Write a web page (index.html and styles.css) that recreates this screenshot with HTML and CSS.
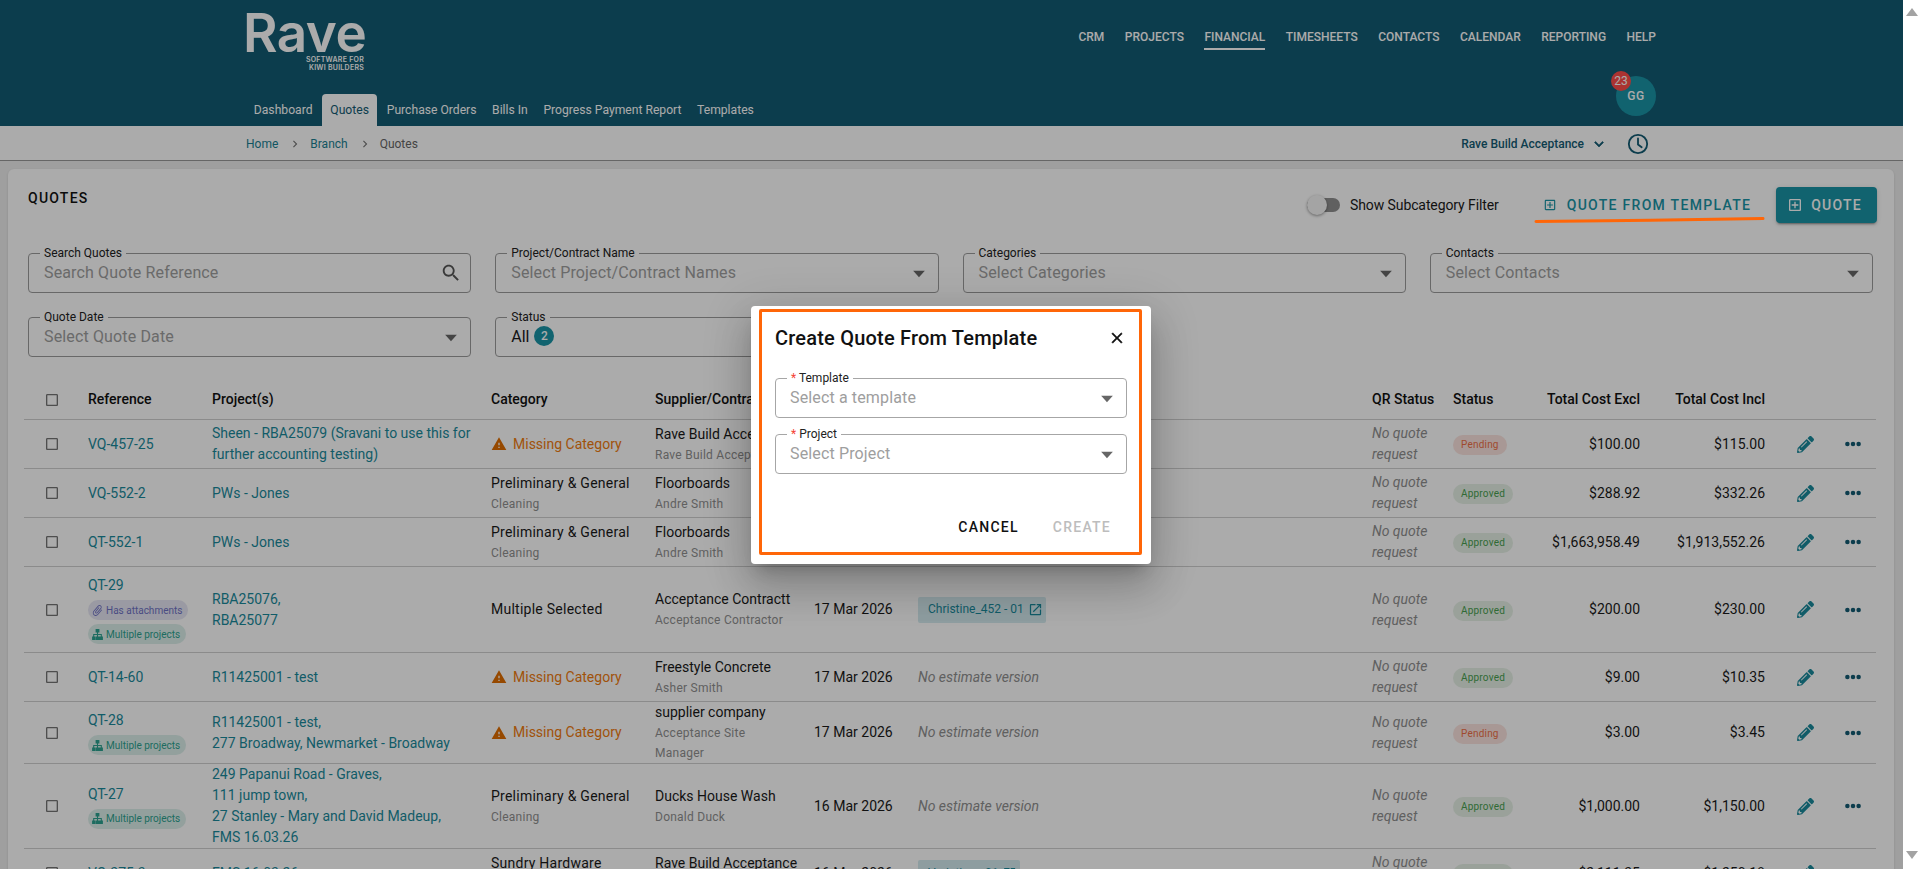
FILE: index.html
```html
<!DOCTYPE html>
<html lang="en">
<head>
<meta charset="utf-8">
<title>Quotes</title>
<link rel="stylesheet" href="styles.css">
</head>
<body>
<svg class="sprite" aria-hidden="true">
  <symbol id="i-search" viewBox="0 0 24 24"><path d="M15.5 14h-.79l-.28-.27C15.41 12.59 16 11.11 16 9.5 16 5.91 13.09 3 9.5 3S3 5.91 3 9.5 5.91 16 9.5 16c1.61 0 3.09-.59 4.23-1.57l.27.28v.79l5 4.99L20.49 19l-4.99-5zm-6 0C7.01 14 5 11.99 5 9.5S7.01 5 9.5 5 14 7.01 14 9.5 11.99 14 9.5 14z"/></symbol>
  <symbol id="i-caret" viewBox="0 0 24 24"><path d="M5 8h14l-7 8z"/></symbol>
  <symbol id="i-warn" viewBox="0 0 24 24"><path d="M1 21h22L12 2 1 21zm12-3h-2v-2h2v2zm0-4h-2v-4h2v4z"/></symbol>
  <symbol id="i-edit" viewBox="0 0 512 512"><path d="M497.900 142.100l-46.100 46.100c-4.700 4.700-12.300 4.700-17 0l-111-111c-4.700-4.700-4.700-12.300 0-17l46.100-46.100c18.700-18.700 49.100-18.700 67.900 0l60.100 60.100c18.800 18.700 18.800 49.100 0 67.900zM284.200 99.800L21.600 362.400.4 483.900c-2.900 16.400 11.400 30.600 27.800 27.800l121.500-21.300 262.600-262.600c4.700-4.700 4.700-12.300 0-17l-111-111c-4.800-4.700-12.400-4.700-17.100 0zM124.100 339.900c-5.500-5.500-5.500-14.300 0-19.800l154-154c5.500-5.500 14.300-5.500 19.800 0s5.500 14.300 0 19.800l-154 154c-5.500 5.500-14.300 5.500-19.800 0zM88 424h48v36.300l-64.500 11.300-31.100-31.100L51.700 376H88v48z"/></symbol>
  <symbol id="i-dots" viewBox="0 0 24 24"><circle cx="4.5" cy="12" r="3"/><circle cx="12" cy="12" r="3"/><circle cx="19.5" cy="12" r="3"/></symbol>
  <symbol id="i-box" viewBox="0 0 24 24"><path d="M19 3H5c-1.1 0-2 .9-2 2v14c0 1.1.9 2 2 2h14c1.1 0 2-.9 2-2V5c0-1.1-.9-2-2-2zm0 16H5V5h14v14zm-8-2h2v-4h4v-2h-4V7h-2v4H7v2h4z"/></symbol>
  <symbol id="i-check" viewBox="0 0 24 24"><path d="M19 5v14H5V5h14m0-2H5c-1.1 0-2 .9-2 2v14c0 1.1.9 2 2 2h14c1.1 0 2-.9 2-2V5c0-1.1-.9-2-2-2z"/></symbol>
  <symbol id="i-clip" viewBox="0 0 24 24"><path transform="rotate(40 12 12)" d="M16.5 6v11.5c0 2.21-1.79 4-4 4s-4-1.79-4-4V5c0-1.38 1.12-2.5 2.5-2.5s2.5 1.12 2.5 2.5v10.5c0 .55-.45 1-1 1s-1-.45-1-1V6H10v9.5c0 1.38 1.12 2.5 2.5 2.5s2.5-1.12 2.5-2.5V5c0-2.21-1.79-4-4-4S7 2.79 7 5v12.5c0 3.04 2.46 5.5 5.5 5.5s5.5-2.46 5.5-5.5V6h-1.5z"/></symbol>
  <symbol id="i-tree" viewBox="0 0 24 24"><path d="M8.500 2h7v6.500h-2.500V11H20v4.500h2V22h-6.500v-6.500h2.500V13h-5v2.500h2.500V22h-6.500v-6.500H11V13H6v2.500h2.500V22H2v-6.500h2V11h7V8.500H8.500z"/></symbol>
  <symbol id="i-open" viewBox="0 0 24 24"><path d="M19 19H5V5h7V3H5c-1.11 0-2 .9-2 2v14c0 1.1.89 2 2 2h14c1.100 0 2-.9 2-2v-7h-2v7zM14 3v2h3.590l-9.830 9.830 1.410 1.410L19 6.410V10h2V3h-7z"/></symbol>
  <symbol id="i-chev" viewBox="0 0 24 24"><path d="M7.410 8.590 12 13.170l4.590-4.580L18 10l-6 6-6-6z"/></symbol>
  <symbol id="i-next" viewBox="0 0 24 24"><path d="M10 6 8.590 7.410 13.170 12l-4.580 4.590L10 18l6-6z"/></symbol>
  <symbol id="i-close" viewBox="0 0 24 24"><path d="M19 6.410 17.590 5 12 10.590 6.410 5 5 6.410 10.590 12 5 17.590 6.410 19 12 13.410 17.590 19 19 17.590 13.410 12z"/></symbol>
  <symbol id="i-clock" viewBox="0 0 24 24"><circle cx="12" cy="12" r="10" fill="none" stroke="currentColor" stroke-width="2"/><path d="M12 6v6.500l4 3" fill="none" stroke="currentColor" stroke-width="2" stroke-linecap="round"/></symbol>
</svg>

<div class="shell">
  <div class="app">
    <header class="header">
      <div class="brand-col">
        <div class="logo">
          <div class="logo-word">Rave</div>
          <div class="logo-tag">SOFTWARE FOR<br>KIWI BUILDERS</div>
        </div>
        <nav class="tabs">
          <a class="tab">Dashboard</a>
          <a class="tab tab-active">Quotes</a>
          <a class="tab">Purchase Orders</a>
          <a class="tab">Bills In</a>
          <a class="tab">Progress Payment Report</a>
          <a class="tab">Templates</a>
        </nav>
      </div>
      <div class="user-col">
        <nav class="topnav">
          <a class="topnav-item">CRM</a>
          <a class="topnav-item">PROJECTS</a>
          <a class="topnav-item topnav-active">FINANCIAL</a>
          <a class="topnav-item">TIMESHEETS</a>
          <a class="topnav-item">CONTACTS</a>
          <a class="topnav-item">CALENDAR</a>
          <a class="topnav-item">REPORTING</a>
          <a class="topnav-item">HELP</a>
        </nav>
        <div class="avatar">GG<span class="avatar-badge">23</span></div>
      </div>
    </header>

    <div class="crumbbar">
      <div class="crumbs">
        <a class="crumb-link">Home</a>
        <svg class="crumb-sep"><use href="#i-next"/></svg>
        <a class="crumb-link">Branch</a>
        <svg class="crumb-sep"><use href="#i-next"/></svg>
        <span class="crumb-current">Quotes</span>
      </div>
      <div class="org">
        <span class="org-name">Rave Build Acceptance</span>
        <svg class="org-chev"><use href="#i-chev"/></svg>
        <svg class="org-clock"><use href="#i-clock"/></svg>
      </div>
    </div>

    <main class="page">
      <section class="card">
        <div class="card-head">
          <h1 class="card-title">QUOTES</h1>
          <div class="card-actions">
            <span class="switch"><span class="switch-thumb"></span></span>
            <span class="switch-label">Show Subcategory Filter</span>
            <button class="btn-text"><svg class="btn-icon"><use href="#i-box"/></svg>QUOTE FROM TEMPLATE</button>
            <button class="btn-solid"><svg class="btn-icon"><use href="#i-box"/></svg>QUOTE</button>
          </div>
        </div>

        <div class="filters">
          <div class="field"><span class="field-label">Search Quotes</span><span class="field-ph">Search Quote Reference</span><svg class="field-search"><use href="#i-search"/></svg></div>
          <div class="field"><span class="field-label">Project/Contract Name</span><span class="field-ph">Select Project/Contract Names</span><svg class="field-caret"><use href="#i-caret"/></svg></div>
          <div class="field"><span class="field-label">Categories</span><span class="field-ph">Select Categories</span><svg class="field-caret"><use href="#i-caret"/></svg></div>
          <div class="field"><span class="field-label">Contacts</span><span class="field-ph">Select Contacts</span><svg class="field-caret"><use href="#i-caret"/></svg></div>
          <div class="field"><span class="field-label">Quote Date</span><span class="field-ph">Select Quote Date</span><svg class="field-caret"><use href="#i-caret"/></svg></div>
          <div class="field"><span class="field-label">Status</span><span class="field-value">All</span><span class="count">2</span><svg class="field-caret"><use href="#i-caret"/></svg></div>
        </div>

        <table class="grid">
          <colgroup>
            <col class="c-check"><col class="c-ref"><col class="c-proj"><col class="c-cat"><col class="c-sup"><col class="c-date"><col class="c-est"><col class="c-qr"><col class="c-status"><col class="c-excl"><col class="c-incl"><col class="c-edit"><col class="c-more">
          </colgroup>
          <thead>
            <tr>
              <th class="cell-center"><svg class="check"><use href="#i-check"/></svg></th>
              <th>Reference</th><th>Project(s)</th><th>Category</th><th>Supplier/Contractor</th><th>Date</th><th>Estimate Version</th><th>QR Status</th><th>Status</th>
              <th class="num">Total Cost Excl</th><th class="num">Total Cost Incl</th><th></th><th></th>
            </tr>
          </thead>
          <tbody>
            <tr>
              <td class="cell-center"><svg class="check"><use href="#i-check"/></svg></td>
              <td><a class="link">VQ-457-25</a></td>
              <td class="cell-proj"><a class="link">Sheen - RBA25079 (Sravani to use this for further accounting testing)</a></td>
              <td class="cell-cat"><span class="missing"><svg class="warn"><use href="#i-warn"/></svg>Missing Category</span></td>
              <td><div>Rave Build Acceptance</div><div class="sub">Rave Build Acceptance</div></td>
              <td>17 Mar 2026</td><td class="muted-i">No estimate version</td>
              <td class="muted-i">No quote request</td>
              <td><span class="pill pill-pending">Pending</span></td>
              <td class="num">$100.00</td><td class="num">$115.00</td>
              <td class="cell-edit"><svg class="edit"><use href="#i-edit"/></svg></td>
              <td class="cell-center"><svg class="dots"><use href="#i-dots"/></svg></td>
            </tr>
            <tr>
              <td class="cell-center"><svg class="check"><use href="#i-check"/></svg></td>
              <td><a class="link">VQ-552-2</a></td>
              <td class="cell-proj"><a class="link">PWs - Jones</a></td>
              <td class="cell-cat"><div>Preliminary &amp; General</div><div class="sub">Cleaning</div></td>
              <td><div>Floorboards</div><div class="sub">Andre Smith</div></td>
              <td>17 Mar 2026</td><td class="muted-i">No estimate version</td>
              <td class="muted-i">No quote request</td>
              <td><span class="pill pill-ok">Approved</span></td>
              <td class="num">$288.92</td><td class="num">$332.26</td>
              <td class="cell-edit"><svg class="edit"><use href="#i-edit"/></svg></td>
              <td class="cell-center"><svg class="dots"><use href="#i-dots"/></svg></td>
            </tr>
            <tr>
              <td class="cell-center"><svg class="check"><use href="#i-check"/></svg></td>
              <td><a class="link">QT-552-1</a></td>
              <td class="cell-proj"><a class="link">PWs - Jones</a></td>
              <td class="cell-cat"><div>Preliminary &amp; General</div><div class="sub">Cleaning</div></td>
              <td><div>Floorboards</div><div class="sub">Andre Smith</div></td>
              <td>17 Mar 2026</td><td class="muted-i">No estimate version</td>
              <td class="muted-i">No quote request</td>
              <td><span class="pill pill-ok">Approved</span></td>
              <td class="num">$1,663,958.49</td><td class="num">$1,913,552.26</td>
              <td class="cell-edit"><svg class="edit"><use href="#i-edit"/></svg></td>
              <td class="cell-center"><svg class="dots"><use href="#i-dots"/></svg></td>
            </tr>
            <tr>
              <td class="cell-center"><svg class="check"><use href="#i-check"/></svg></td>
              <td><div class="ref-stack"><a class="link">QT-29</a><span class="chip chip-purple"><svg class="chip-icon"><use href="#i-clip"/></svg>Has attachments</span><span class="chip chip-teal"><svg class="chip-icon"><use href="#i-tree"/></svg>Multiple projects</span></div></td>
              <td class="cell-proj"><a class="link">RBA25076,<br>RBA25077</a></td>
              <td class="cell-cat">Multiple Selected</td>
              <td><div>Acceptance Contractt</div><div class="sub">Acceptance Contractor</div></td>
              <td>17 Mar 2026</td>
              <td><span class="est">Christine_452 - 01<svg class="est-icon"><use href="#i-open"/></svg></span></td>
              <td class="muted-i">No quote request</td>
              <td><span class="pill pill-ok">Approved</span></td>
              <td class="num">$200.00</td><td class="num">$230.00</td>
              <td class="cell-edit"><svg class="edit"><use href="#i-edit"/></svg></td>
              <td class="cell-center"><svg class="dots"><use href="#i-dots"/></svg></td>
            </tr>
            <tr>
              <td class="cell-center"><svg class="check"><use href="#i-check"/></svg></td>
              <td><a class="link">QT-14-60</a></td>
              <td class="cell-proj"><a class="link">R11425001 - test</a></td>
              <td class="cell-cat"><span class="missing"><svg class="warn"><use href="#i-warn"/></svg>Missing Category</span></td>
              <td><div>Freestyle Concrete</div><div class="sub">Asher Smith</div></td>
              <td>17 Mar 2026</td><td class="muted-i">No estimate version</td>
              <td class="muted-i">No quote request</td>
              <td><span class="pill pill-ok">Approved</span></td>
              <td class="num">$9.00</td><td class="num">$10.35</td>
              <td class="cell-edit"><svg class="edit"><use href="#i-edit"/></svg></td>
              <td class="cell-center"><svg class="dots"><use href="#i-dots"/></svg></td>
            </tr>
            <tr>
              <td class="cell-center"><svg class="check"><use href="#i-check"/></svg></td>
              <td><div class="ref-stack"><a class="link">QT-28</a><span class="chip chip-teal"><svg class="chip-icon"><use href="#i-tree"/></svg>Multiple projects</span></div></td>
              <td class="cell-proj"><a class="link">R11425001 - test,<br>277 Broadway, Newmarket - Broadway</a></td>
              <td class="cell-cat"><span class="missing"><svg class="warn"><use href="#i-warn"/></svg>Missing Category</span></td>
              <td><div>supplier company</div><div class="sub">Acceptance Site Manager</div></td>
              <td>17 Mar 2026</td><td class="muted-i">No estimate version</td>
              <td class="muted-i">No quote request</td>
              <td><span class="pill pill-pending">Pending</span></td>
              <td class="num">$3.00</td><td class="num">$3.45</td>
              <td class="cell-edit"><svg class="edit"><use href="#i-edit"/></svg></td>
              <td class="cell-center"><svg class="dots"><use href="#i-dots"/></svg></td>
            </tr>
            <tr>
              <td class="cell-center"><svg class="check"><use href="#i-check"/></svg></td>
              <td><div class="ref-stack"><a class="link">QT-27</a><span class="chip chip-teal"><svg class="chip-icon"><use href="#i-tree"/></svg>Multiple projects</span></div></td>
              <td class="cell-proj"><a class="link">249 Papanui Road - Graves,<br>111 jump town,<br>27 Stanley - Mary and David Madeup,<br>FMS 16.03.26</a></td>
              <td class="cell-cat"><div>Preliminary &amp; General</div><div class="sub">Cleaning</div></td>
              <td><div>Ducks House Wash</div><div class="sub">Donald Duck</div></td>
              <td>16 Mar 2026</td><td class="muted-i">No estimate version</td>
              <td class="muted-i">No quote request</td>
              <td><span class="pill pill-ok">Approved</span></td>
              <td class="num">$1,000.00</td><td class="num">$1,150.00</td>
              <td class="cell-edit"><svg class="edit"><use href="#i-edit"/></svg></td>
              <td class="cell-center"><svg class="dots"><use href="#i-dots"/></svg></td>
            </tr>
            <tr>
              <td class="cell-center"><svg class="check"><use href="#i-check"/></svg></td>
              <td><a class="link">VQ-375-3</a></td>
              <td class="cell-proj"><a class="link">FMS 16.03.26</a></td>
              <td class="cell-cat"><div>Sundry Hardware</div><div class="sub">Fixings</div></td>
              <td><div>Rave Build Acceptance</div><div class="sub">Rave Build Acceptance</div></td>
              <td>16 Mar 2026</td>
              <td><span class="est">Variation - 01<svg class="est-icon"><use href="#i-open"/></svg></span></td>
              <td class="muted-i">No quote request</td>
              <td><span class="pill pill-ok">Approved</span></td>
              <td class="num">$2,111.35</td><td class="num">$1,250.18</td>
              <td class="cell-edit"><svg class="edit"><use href="#i-edit"/></svg></td>
              <td class="cell-center"><svg class="dots"><use href="#i-dots"/></svg></td>
            </tr>
          </tbody>
        </table>
      </section>
    </main>

    <div class="backdrop">
      <div class="modal" role="dialog">
        <div class="modal-head">
          <h2 class="modal-title">Create Quote From Template</h2>
          <svg class="modal-close"><use href="#i-close"/></svg>
        </div>
        <div class="modal-body">
          <div class="field field-modal"><span class="field-label"><span class="req">*</span> Template</span><span class="field-ph">Select a template</span><svg class="field-caret"><use href="#i-caret"/></svg></div>
          <div class="field field-modal"><span class="field-label"><span class="req">*</span> Project</span><span class="field-ph">Select Project</span><svg class="field-caret"><use href="#i-caret"/></svg></div>
        </div>
        <div class="modal-foot">
          <button class="modal-btn">CANCEL</button>
          <button class="modal-btn modal-btn-off">CREATE</button>
        </div>
        <div class="mark-box"></div>
      </div>
    </div>
    <svg class="mark-line" viewBox="0 0 232 8"><path d="M2 5.500 C 60 5 170 3.500 229 2.500"/></svg>
  </div>

  <div class="scrollbar">
    <span class="scroll-up"></span>
    <span class="scroll-down"></span>
  </div>
</div>
</body>
</html>
```

FILE: styles.css
```css
* { box-sizing: border-box; }
html, body { margin: 0; height: 100%; overflow: hidden; }
body { font-family: Roboto, "Liberation Sans", sans-serif; font-size: 14px; color: #1a1a1a; background: #fff; }
a { text-decoration: none; }
h1, h2 { margin: 0; }
button { font: inherit; border: 0; background: none; cursor: pointer; }
.sprite { display: none; }

.shell { display: flex; height: 869px; overflow: hidden; }
.app { position: relative; width: 1903px; flex: none; height: 869px; overflow: hidden; background: #eee; }
.scrollbar { flex: 1; display: flex; flex-direction: column; justify-content: space-between; align-items: center; background: #fff; padding: 8px 0 10px; }
.scroll-up { border: 5px solid transparent; border-top: 0; border-bottom: 8px solid #a3a3a3; border-left-width: 6px; border-right-width: 6px; }
.scroll-down { border: 5px solid transparent; border-bottom: 0; border-top: 8px solid #a3a3a3; border-left-width: 6px; border-right-width: 6px; }

/* header */
.header { height: 126px; background: #135b73; display: flex; justify-content: space-between; padding: 0 247px 0 243px; }
.brand-col { display: flex; flex-direction: column; justify-content: space-between; }
.logo { width: 121px; padding-top: 14px; color: #fff; }
.logo-word { font-family: Inter, Roboto, sans-serif; font-weight: 600; font-size: 53px; line-height: 38px; letter-spacing: -.5px; }
.logo-tag { margin-top: 4px; text-align: right; font-family: Inter, Roboto, sans-serif; font-weight: 600; font-size: 7px; line-height: 8px; letter-spacing: .25px; }
.tabs { display: flex; padding-left: 3px; }
.tab { height: 32px; line-height: 32px; padding: 0 7.800px; font-size: 12.150px; color: #fff; }
.tab-active { background: #fff; color: #135b73; border-radius: 4px 4px 0 0; margin: 0 2px; padding: 0 8px; }
.user-col { display: flex; flex-direction: column; justify-content: space-between; align-items: flex-end; }
.topnav { display: flex; gap: 20.500px; padding-top: 30px; }
.topnav-item { font-size: 12px; font-weight: 500; line-height: 15px; padding-bottom: 3px; border-bottom: 2px solid transparent; color: #fff; }
.topnav-active { border-bottom-color: #fff; }
.avatar { position: relative; width: 40px; height: 40px; margin-bottom: 10px; border-radius: 50%; background: #1a94a6; color: #fff; font-size: 12px; font-weight: 500; letter-spacing: .5px; display: flex; align-items: center; justify-content: center; }
.avatar-badge { position: absolute; left: -5px; top: -5px; width: 20px; height: 20px; border-radius: 50%; background: #ff4d4a; color: #fff; font-size: 12px; font-weight: 400; letter-spacing: 0; display: flex; align-items: center; justify-content: center; }

/* breadcrumb bar */
.crumbbar { height: 35px; background: #fff; border-bottom: 1px solid #999; display: flex; justify-content: space-between; align-items: center; padding: 1px 254px 0 246px; font-size: 12px; }
.crumbs { display: flex; align-items: center; }
.crumb-link { color: #1a7f92; }
.crumb-current { color: #666; }
.crumb-sep { width: 14px; height: 14px; margin: 0 8px 0 10px; fill: #777; }
.org { display: flex; align-items: center; }
.org-name { font-weight: 500; color: #135b73; }
.org-chev { width: 18px; height: 18px; margin: 0 19px 0 6px; fill: #135b73; stroke: #135b73; stroke-width: .8; }
.org-clock { width: 22px; height: 22px; color: #135b73; }

/* card */
.page { padding: 8px 9px 0 8px; }
.card { background: #fff; border-radius: 6px 6px 0 0; padding: 18px 17px 0 20px; height: 720px; overflow: hidden; box-shadow: 0 1px 3px rgba(0,0,0,.12); }
.card-head { display: flex; justify-content: space-between; height: 36px; }
.card-title { font-size: 14px; font-weight: 500; letter-spacing: 1.250px; line-height: 22px; color: #111; }
.card-actions { display: flex; align-items: center; }
.switch { position: relative; width: 33px; height: 14px; border-radius: 7px; background: #909090; }
.switch-thumb { position: absolute; left: 0; top: -3px; width: 20px; height: 20px; border-radius: 50%; background: #f5f5f5; box-shadow: 0 1px 3px rgba(0,0,0,.4); }
.switch-label { margin-left: 10px; font-size: 14px; letter-spacing: -.1px; color: #1a1a1a; }
.btn-text { margin-left: 36px; height: 36px; padding: 0 14px 0 8px; display: flex; align-items: center; font-size: 14px; font-weight: 500; letter-spacing: 1.300px; color: #1a94a6; }
.btn-text .btn-icon { width: 14px; height: 16px; margin-right: 10px; }
.btn-solid { height: 36px; margin-left: 11px; padding: 0 15px 0 11px; display: flex; align-items: center; background: #1a94a6; color: #fff; font-size: 14px; font-weight: 500; letter-spacing: 1.250px; border-radius: 4px; box-shadow: 0 3px 1px -2px rgba(0,0,0,.2), 0 2px 2px rgba(0,0,0,.14), 0 1px 5px rgba(0,0,0,.12); }
.btn-icon { width: 16px; height: 16px; margin-right: 8px; fill: currentColor; }

/* fields */
.filters { display: grid; grid-template-columns: repeat(4, 1fr); gap: 24px; width: 1845px; margin-top: 30px; }
.field { position: relative; height: 40px; display: flex; align-items: center; gap: 5px; padding: 0 36px 2px 15px; border: 1px solid #9c9c9c; border-radius: 4px; }
.field-label { position: absolute; left: 11px; top: -8px; padding: 0 4px; background: #fff; font-size: 12px; line-height: 14px; color: #222; white-space: nowrap; }
.field-ph { font-size: 16px; letter-spacing: .14px; color: #9e9e9e; }
.field-value { font-size: 16px; color: #1a1a1a; }
.count { width: 20px; height: 20px; border-radius: 50%; background: #1a94a6; color: #fff; font-size: 12px; font-weight: 500; display: flex; align-items: center; justify-content: center; }
.field-caret { position: absolute; right: 9px; top: 10px; width: 20px; height: 20px; fill: #666; }
.field-search { position: absolute; right: 8px; top: 8px; width: 22px; height: 22px; fill: #555; }
.field-modal { border-color: #a6a6a6; padding: 0 36px 0 14px; }
.req { color: #f44336; }

/* table */
.grid { margin-top: 23px; margin-left: -4px; width: 1852px; table-layout: fixed; border-collapse: separate; border-spacing: 0; }
.c-check { width: 64px; } .c-ref { width: 124px; } .c-proj { width: 279px; } .c-cat { width: 164px; }
.c-sup { width: 159px; } .c-date { width: 104px; } .c-est { width: 454px; } .c-qr { width: 81px; }
.c-status { width: 90px; } .c-excl { width: 97px; } .c-incl { width: 125px; } .c-edit { width: 64px; } .c-more { width: 47px; }
.grid th { height: 40px; padding: 0; border-bottom: 1px solid #d0d0d0; font-size: 14px; font-weight: 500; line-height: 21px; text-align: left; white-space: nowrap; color: #111; }
.grid td { height: 49px; padding: 0; border-bottom: 1px solid #d0d0d0; font-size: 14px; line-height: 21px; vertical-align: middle; color: #1a1a1a; }
.grid .num { text-align: right; }
.grid .cell-center { text-align: center; padding-right: 8px; }
.grid td.cell-center:last-child { padding-right: 0; }
.grid .cell-proj { padding-right: 10px; }
.grid .cell-cat { letter-spacing: .25px; }
.grid .cell-edit { padding-left: 32px; }
.link { color: #1a8a9c; }
.sub { font-size: 12px; line-height: 20px; letter-spacing: .25px; color: #8f8f8f; max-width: 135px; }
.grid .muted-i { font-style: italic; color: #8f8f8f; }
.check { width: 16px; height: 16px; fill: #757575; display: block; margin: 0 auto; }
.missing { display: flex; align-items: center; gap: 6px; letter-spacing: 0; color: #ef7b10; }
.warn { width: 16px; height: 16px; fill: #e06e00; }
.edit { width: 17px; height: 17px; fill: #1a8a9c; display: block; }
.dots { width: 18px; height: 18px; fill: #135b73; display: block; margin: 0 auto; }
.pill { display: inline-block; height: 20px; line-height: 20px; padding: 0 8px; border-radius: 10px; font-size: 10px; letter-spacing: .2px; }
.pill-pending { background: #fbe3de; color: #ee6f46; }
.pill-ok { background: #e6f1e6; color: #48a050; }
.ref-stack { display: flex; flex-direction: column; align-items: flex-start; gap: 4px; padding: 8px 0; }
.chip { display: inline-flex; align-items: center; gap: 2px; height: 20px; padding: 0 6px 0 3px; border-radius: 10px; font-size: 10px; white-space: nowrap; }
.chip-icon { width: 13px; height: 13px; fill: currentColor; }
.chip-purple { background: #e6e6f3; color: #6f72c4; }
.chip-teal { background: #dcefeb; color: #2ca28f; }
.est { display: inline-flex; align-items: center; gap: 4px; height: 26px; padding: 0 3px 0 10px; border-radius: 2px; background: #d4ebef; color: #1a8a9c; font-size: 12px; vertical-align: middle; }
.est-icon { width: 15px; height: 15px; fill: currentColor; }

/* overlay */
.backdrop { position: absolute; inset: 0; padding-right: 1px; background: rgba(0,0,0,.33); display: flex; align-items: center; justify-content: center; }
.modal { position: relative; width: 400px; height: 258px; padding: 20px 24px; background: #fff; border-radius: 4px; display: flex; flex-direction: column; box-shadow: 0 11px 15px -7px rgba(0,0,0,.2), 0 24px 38px 3px rgba(0,0,0,.14), 0 9px 46px 8px rgba(0,0,0,.12); }
.modal-head { display: flex; justify-content: space-between; align-items: center; height: 24px; }
.modal-title { font-size: 20px; font-weight: 500; line-height: 24px; letter-spacing: .2px; color: #111; }
.modal-close { width: 18px; height: 18px; margin-right: 1px; fill: #111; stroke: #111; stroke-width: .6; }
.modal-body { display: flex; flex-direction: column; gap: 16px; margin-top: 28px; }
.modal-foot { display: flex; justify-content: flex-end; margin: 36px -1px 0 0; }
.modal-btn { height: 34px; padding: 0 17px; font-size: 14px; font-weight: 500; letter-spacing: 1.250px; color: #111; }
.modal-btn-off { color: #bdbdbd; }
.mark-box { position: absolute; left: 8px; right: 9px; top: 3px; bottom: 9px; border: 3px solid #ff6608; border-radius: 2px; pointer-events: none; }
.mark-line { position: absolute; left: 1534px; top: 216px; width: 232px; height: 8px; fill: none; stroke: #ff6608; stroke-width: 3; stroke-linecap: round; }
```
